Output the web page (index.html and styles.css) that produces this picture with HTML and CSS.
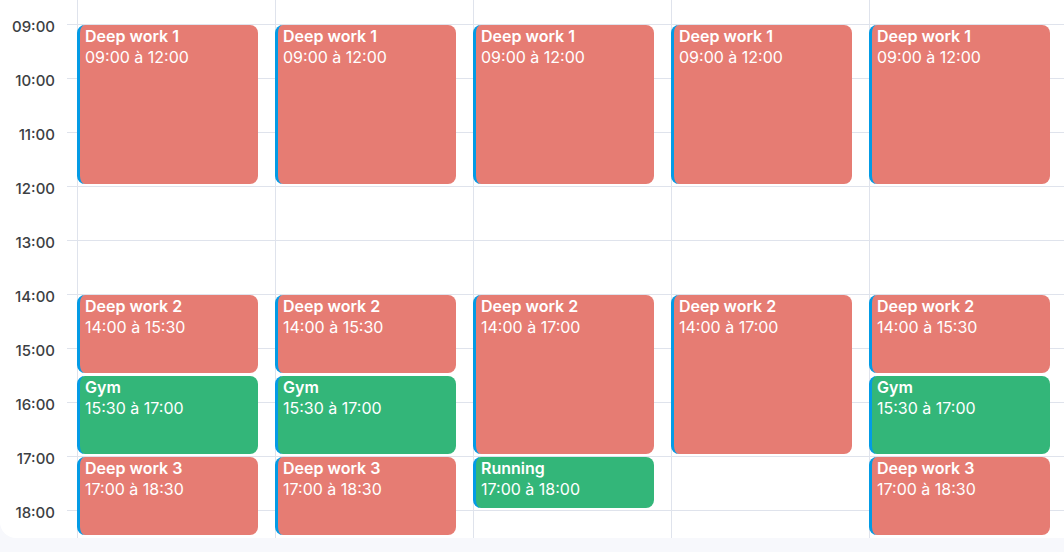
FILE: index.html
```html
<!DOCTYPE html>
<html lang="fr">
<head>
<meta charset="utf-8">
<title>Semaine</title>
<link rel="stylesheet" href="styles.css">
</head>
<body>
<div class="calendar">
  <div class="hline r2"></div>
  <div class="hline r4"></div>
  <div class="hline r6"></div>
  <div class="hline r8"></div>
  <div class="hline r10"></div>
  <div class="hline r12"></div>
  <div class="hline r14"></div>
  <div class="hline r16"></div>
  <div class="hline r18"></div>
  <div class="hline r20"></div>

  <div class="label r2">09:00</div>
  <div class="label r4">10:00</div>
  <div class="label r6">11:00</div>
  <div class="label r8">12:00</div>
  <div class="label r10">13:00</div>
  <div class="label r12">14:00</div>
  <div class="label r14">15:00</div>
  <div class="label r16">16:00</div>
  <div class="label r18">17:00</div>
  <div class="label r20">18:00</div>

  <div class="day c1"></div>
  <div class="day c2"></div>
  <div class="day c3"></div>
  <div class="day c4"></div>
  <div class="day c5"></div>

  <!-- Day 1 -->
  <div class="event work c1 s9 e12"><b>Deep work 1</b><span>09:00 à 12:00</span></div>
  <div class="event work c1 s14 e1530"><b>Deep work 2</b><span>14:00 à 15:30</span></div>
  <div class="event sport c1 s1530 e17"><b>Gym</b><span>15:30 à 17:00</span></div>
  <div class="event work c1 s17 e1830"><b>Deep work 3</b><span>17:00 à 18:30</span></div>

  <!-- Day 2 -->
  <div class="event work c2 s9 e12"><b>Deep work 1</b><span>09:00 à 12:00</span></div>
  <div class="event work c2 s14 e1530"><b>Deep work 2</b><span>14:00 à 15:30</span></div>
  <div class="event sport c2 s1530 e17"><b>Gym</b><span>15:30 à 17:00</span></div>
  <div class="event work c2 s17 e1830"><b>Deep work 3</b><span>17:00 à 18:30</span></div>

  <!-- Day 3 -->
  <div class="event work c3 s9 e12"><b>Deep work 1</b><span>09:00 à 12:00</span></div>
  <div class="event work c3 s14 e17"><b>Deep work 2</b><span>14:00 à 17:00</span></div>
  <div class="event sport c3 s17 e18"><b>Running</b><span>17:00 à 18:00</span></div>

  <!-- Day 4 -->
  <div class="event work c4 s9 e12"><b>Deep work 1</b><span>09:00 à 12:00</span></div>
  <div class="event work c4 s14 e17"><b>Deep work 2</b><span>14:00 à 17:00</span></div>

  <!-- Day 5 -->
  <div class="event work c5 s9 e12"><b>Deep work 1</b><span>09:00 à 12:00</span></div>
  <div class="event work c5 s14 e1530"><b>Deep work 2</b><span>14:00 à 15:30</span></div>
  <div class="event sport c5 s1530 e17"><b>Gym</b><span>15:30 à 17:00</span></div>
  <div class="event work c5 s17 e1830"><b>Deep work 3</b><span>17:00 à 18:30</span></div>
</div>
</body>
</html>
```

FILE: styles.css
```css
html, body {
  margin: 0;
  padding: 0;
}

body {
  background: #f7f8fc;
  font-family: Inter, "Noto Sans", "Liberation Sans", sans-serif;
  overflow: hidden;
  width: 1064px;
  height: 552px;
}

.calendar {
  display: grid;
  grid-template-columns: 77px repeat(5, 198px);
  grid-template-rows: 24px repeat(20, 27px);
  width: 1080px;
  height: 538px;
  overflow: hidden;
  background: #ffffff;
  border-bottom-left-radius: 16px;
}

.hline {
  grid-column: 1 / -1;
  margin-left: 67px;
  border-top: 1px solid #dfe3ec;
}

.label {
  grid-column: 1;
  align-self: start;
  justify-self: end;
  margin-top: -7px;
  margin-right: 22px;
  font-size: 15px;
  line-height: 20px;
  font-weight: 500;
  color: #3c4043;
  z-index: 1;
  background: #fff;
}

.day {
  grid-row: 1 / -1;
  border-left: 1px solid #dfe3ec;
}

.r2 { grid-row: 2; }
.r4 { grid-row: 4; }
.r6 { grid-row: 6; }
.r8 { grid-row: 8; }
.r10 { grid-row: 10; }
.r12 { grid-row: 12; }
.r14 { grid-row: 14; }
.r16 { grid-row: 16; }
.r18 { grid-row: 18; }
.r20 { grid-row: 20; }

.c1 { grid-column: 2; }
.c2 { grid-column: 3; }
.c3 { grid-column: 4; }
.c4 { grid-column: 5; }
.c5 { grid-column: 6; }

.event {
  display: flex;
  flex-direction: column;
  margin: 1px 17px 2px 0;
  padding: 1px 6px 0 5px;
  border-left: 3px solid #039be5;
  border-radius: 8px;
  color: #ffffff;
  font-size: 16px;
  line-height: 21px;
  overflow: hidden;
  z-index: 2;
}

.event b {
  font-weight: 600;
}

.work { background: #e67c73; }
.sport { background: #33b679; }

.s9 { grid-row-start: 2; }
.s14 { grid-row-start: 12; }
.s1530 { grid-row-start: 15; }
.s17 { grid-row-start: 18; }

.e12 { grid-row-end: 8; }
.e1530 { grid-row-end: 15; }
.e17 { grid-row-end: 18; }
.e18 { grid-row-end: 20; }
.e1830 { grid-row-end: 21; }
```
